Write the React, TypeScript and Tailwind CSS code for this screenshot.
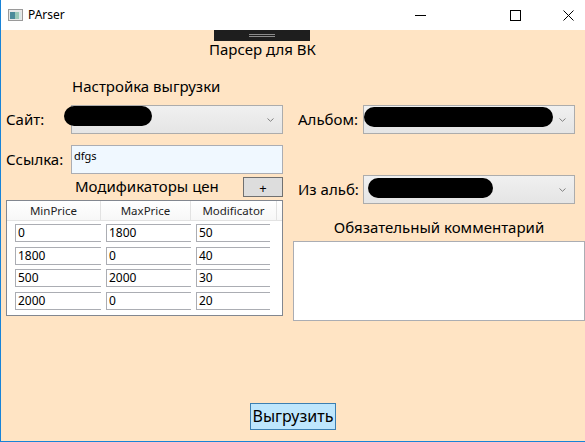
import React from "react";

const font = { fontFamily: '"Noto Sans", "Open Sans", sans-serif' };

function Chevron() {
  return (
    <svg width="7" height="4" viewBox="0 0 7 4" className="shrink-0">
      <path d="M0.5 0.5 L3.5 3.3 L6.5 0.5" fill="none" stroke="#808080" strokeWidth="1" />
    </svg>
  );
}

function Combo({ w, pill }: { w: string; pill: React.ReactNode }) {
  return (
    <div className={`relative h-[29px] ${w} border border-[#acacac] bg-gradient-to-b from-[#f0f0f0] to-[#e5e5e5] flex items-center justify-end pr-[8px]`}>
      {pill}
      <Chevron />
    </div>
  );
}

function Cell({ v, w }: { v: string; w: string }) {
  return (
    <div className={`h-[18px] ${w} border-t border-l border-b border-[#abadb3] bg-white text-[12px] leading-[16px] pl-[2px] text-black`}>
      {v}
    </div>
  );
}

const rows = [
  ["0", "1800", "50"],
  ["1800", "0", "40"],
  ["500", "2000", "30"],
  ["2000", "0", "20"],
];

export default function App() {
  return (
    <div className="w-[585px] h-[442px] border-l border-b border-[#1883d7] flex flex-col overflow-hidden text-black" style={font}>
      {/* Title bar */}
      <div className="h-[30px] bg-white flex items-center shrink-0">
        <svg width="15" height="12" viewBox="0 0 15 12" className="ml-[7px]">
          <rect x="0.5" y="0.5" width="14" height="11" fill="#e8e8e8" stroke="#9a9a9a" />
          <rect x="2" y="3" width="5" height="7" fill="#4a8a9a" />
          <rect x="7" y="3" width="4" height="7" fill="#9ac8b8" />
          <rect x="11" y="3" width="2" height="7" fill="#d8e8e8" />
        </svg>
        <span className="ml-[5px] text-[12px]">PArser</span>
        <div className="ml-auto w-[11px] h-px bg-black" />
        <div className="ml-[84px] w-[11px] h-[11px] border border-black" />
        <svg width="11" height="11" viewBox="0 0 11 11" className="ml-[42px] mr-[11px]">
          <path d="M0.5 0.5 L10.5 10.5 M10.5 0.5 L0.5 10.5" stroke="black" strokeWidth="1" />
        </svg>
      </div>

      {/* Body */}
      <div className="relative flex-1 bg-[#ffe4c4] flex flex-col">
        <div className="absolute left-[213px] top-0 w-[96px] h-[11px] bg-[#1e1e1e] flex flex-col items-center justify-center gap-[1px]">
          <div className="w-[26px] h-px bg-[#8a8a8a]" />
          <div className="w-[26px] h-px bg-[#8a8a8a]" />
        </div>

        <div className="mt-[8px] h-[22px] pl-[208px] text-[15px] leading-[22px]">Парсер для ВК</div>

        <div className="flex items-start">
          {/* Left column */}
          <div className="ml-[5px] w-[277px] flex flex-col">
            <div className="mt-[16px] h-[20px] pl-[66px] text-[15px] leading-[20px]">Настройка выгрузки</div>
            <div className="mt-[9px] h-[29px] flex items-center">
              <div className="w-[65px] text-[15px]">Сайт:</div>
              <Combo
                w="w-[212px]"
                pill={<div className="absolute left-[-8px] top-[0px] w-[88px] h-[20px] rounded-full bg-black" />}
              />
            </div>
            <div className="mt-[11px] h-[29px] flex items-center">
              <div className="w-[65px] text-[15px]">Ссылка:</div>
              <div className="h-[29px] w-[212px] border border-[#abadb3] bg-[#f0f8ff] text-[11px] leading-[14px] pl-[2px] pt-[3px]">dfgs</div>
            </div>
            <div className="mt-[2px] h-[21px] flex items-start">
              <div className="pl-[69px] text-[15px] leading-[21px]">Модификаторы цен</div>
              <div className="ml-auto mt-[1px] w-[40px] h-[20px] border border-[#707070] bg-[#dddddd] flex items-end justify-center text-[13px] leading-[16px]">+</div>
            </div>
            <div className="mt-[3px] h-[116px] w-[277px] border border-[#828790] bg-white flex flex-col">
              <div className="h-[20px] flex border-b border-[#e2e2e2] bg-gradient-to-b from-white to-[#f7f7f7] text-[11.5px] leading-[19px] text-[#1e1e1e]">
                <div className="w-[94px] border-r border-[#e2e2e2] text-center">MinPrice</div>
                <div className="w-[90px] border-r border-[#e2e2e2] text-center">MaxPrice</div>
                <div className="w-[86px] border-r border-[#e2e2e2] text-center">Modificator</div>
              </div>
              <div className="flex flex-col gap-[4.5px] mt-[3px]">
                {rows.map((r, i) => (
                  <div key={i} className="flex h-[18px]">
                    <div className="w-[94px] pl-[8px]"><Cell v={r[0]} w="w-[86px]" /></div>
                    <div className="w-[90px] pl-[5px]"><Cell v={r[1]} w="w-[85px]" /></div>
                    <div className="w-[79px] pl-[5px] overflow-hidden"><Cell v={r[2]} w="w-[80px]" /></div>
                  </div>
                ))}
              </div>
            </div>
          </div>

          {/* Right column */}
          <div className="ml-[10px] w-[292px] flex flex-col">
            <div className="mt-[45px] h-[29px] flex items-center">
              <div className="w-[70px] pl-[5px] text-[15px]">Альбом:</div>
              <Combo
                w="w-[212px]"
                pill={<div className="absolute left-[0px] top-[1px] w-[189px] h-[20px] rounded-full bg-black" />}
              />
            </div>
            <div className="mt-[41px] h-[29px] flex items-center">
              <div className="w-[70px] pl-[5px] text-[15px]">Из альб:</div>
              <Combo
                w="w-[212px]"
                pill={<div className="absolute left-[4px] top-[2px] w-[125px] h-[20px] rounded-full bg-black" />}
              />
            </div>
            <div className="mt-[13px] h-[20px] text-center text-[15px] leading-[20px]">Обязательный комментарий</div>
            <div className="mt-[4px] h-[80px] w-[292px] border border-[#abadb3] bg-white" />
          </div>
        </div>

        <div className="mt-auto mb-[11px] self-center h-[27px] px-[2px] border border-[#3c7fb1] bg-[#bee6fd] text-[16px] leading-[24px]">Выгрузить</div>
      </div>
    </div>
  );
}
